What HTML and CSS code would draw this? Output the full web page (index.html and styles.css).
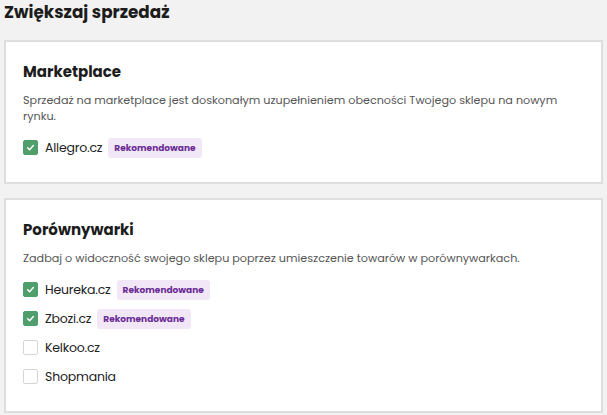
FILE: index.html
```html
<!DOCTYPE html>
<html lang="pl">
<head>
  <meta charset="UTF-8">
  <meta name="viewport" content="width=device-width, initial-scale=1.0">
  <title>Zwiększaj sprzedaż</title>
  <link rel="stylesheet" href="styles.css">
</head>
<body>
  <h1 class="page-title">Zwiększaj sprzedaż</h1>

  <section class="card">
    <h2 class="card-title">Marketplace</h2>
    <p class="card-text">Sprzedaż na marketplace jest doskonałym uzupełnieniem obecności Twojego sklepu na nowym rynku.</p>
    <ul class="options">
      <li class="option">
        <span class="check is-checked"><svg viewBox="0 0 16 16"><path d="M4.5 8.3l2.4 2.4 4.6-5.2"/></svg></span>
        <span class="option-label">Allegro.cz</span>
        <span class="badge">Rekomendowane</span>
      </li>
    </ul>
  </section>

  <section class="card">
    <h2 class="card-title">Porównywarki</h2>
    <p class="card-text">Zadbaj o widoczność swojego sklepu poprzez umieszczenie towarów w porównywarkach.</p>
    <ul class="options">
      <li class="option">
        <span class="check is-checked"><svg viewBox="0 0 16 16"><path d="M4.5 8.3l2.4 2.4 4.6-5.2"/></svg></span>
        <span class="option-label">Heureka.cz</span>
        <span class="badge">Rekomendowane</span>
      </li>
      <li class="option">
        <span class="check is-checked"><svg viewBox="0 0 16 16"><path d="M4.5 8.3l2.4 2.4 4.6-5.2"/></svg></span>
        <span class="option-label">Zbozi.cz</span>
        <span class="badge">Rekomendowane</span>
      </li>
      <li class="option">
        <span class="check"></span>
        <span class="option-label">Kelkoo.cz</span>
      </li>
      <li class="option">
        <span class="check"></span>
        <span class="option-label">Shopmania</span>
      </li>
    </ul>
  </section>
</body>
</html>
```

FILE: styles.css
```css
/* Basic styling */
body {
  font-family: Poppins, Inter, "DejaVu Sans", sans-serif;
  margin: 0;
  padding: 0 4px;
  background-color: #f2f2f2;
  color: #1c1c1c;
}

.page-title {
  font-size: 16.8px;
  font-weight: 700;
  margin: 0;
  padding: 1px 0 0;
  height: 39px;
  line-height: 22px;
}

.card {
  background-color: #fff;
  border: 2px solid #dedede;
  padding: 19px 17px 20px;
  margin-bottom: 14px;
}

.card-title {
  font-size: 15px;
  font-weight: 700;
  margin: 0 0 9px;
  line-height: 22px;
}

.card-text {
  font-size: 11.2px;
  line-height: 16px;
  color: #555;
  margin: 0 0 9px;
  padding-right: 20px;
}

.options {
  list-style: none;
  margin: 0;
  padding: 0;
}

.option {
  display: flex;
  align-items: center;
  height: 29px;
  font-size: 12.5px;
}

.check {
  width: 15px;
  height: 15px;
  box-sizing: border-box;
  border: 1px solid #d6d6d6;
  border-radius: 2px;
  margin-right: 7px;
  background: #fff;
}

.check.is-checked {
  background-color: #4f9e6c;
  border-color: #4f9e6c;
}

.check svg {
  display: block;
  width: 13px;
  height: 13px;
  fill: none;
  stroke: #fff;
  stroke-width: 1.8;
  stroke-linecap: round;
  stroke-linejoin: round;
}

.option-label {
  color: #222;
  letter-spacing: -0.2px;
}

.badge {
  margin-left: 6px;
  background-color: #f1e7f7;
  color: #6b2d95;
  font-size: 9px;
  font-weight: 700;
  padding: 5px 6px;
  border-radius: 3px;
  line-height: 10px;
}
```
